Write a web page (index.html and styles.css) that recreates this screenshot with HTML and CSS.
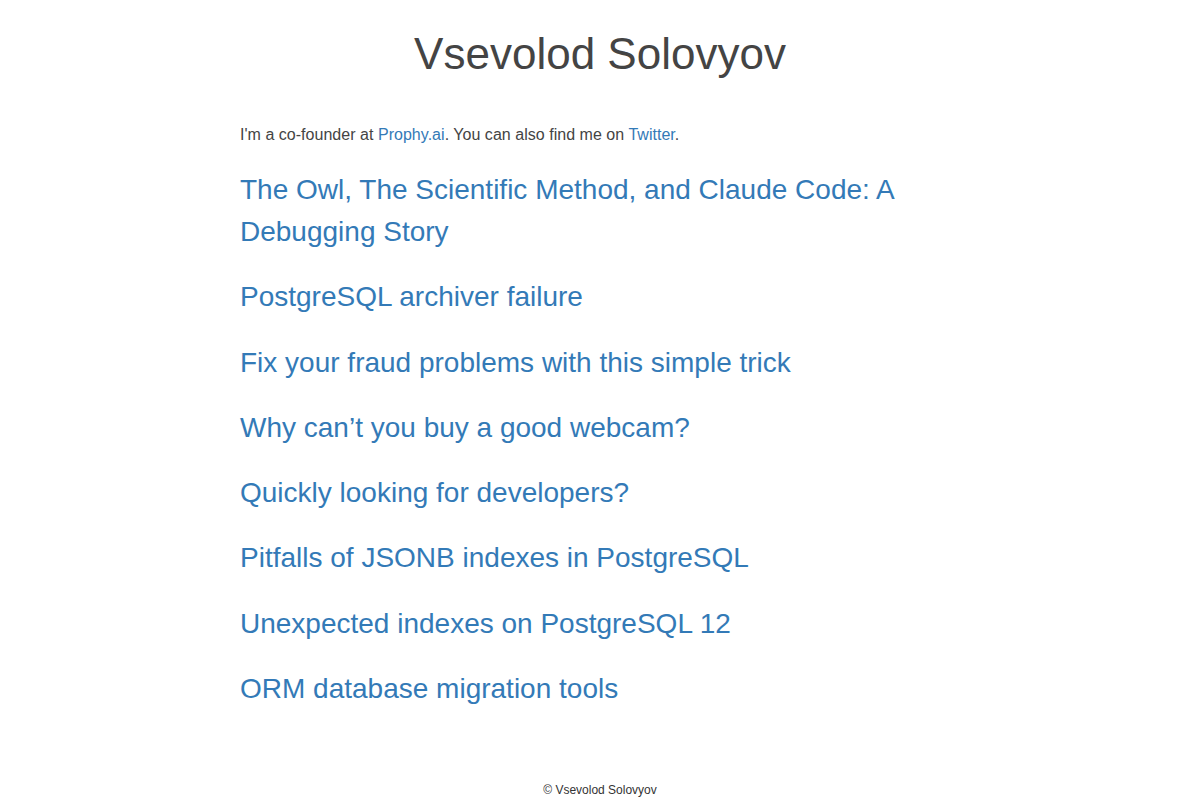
FILE: index.html
```html
<!DOCTYPE html>
<html lang="en">
<head>
<meta charset="utf-8">
<title>Vsevolod Solovyov</title>
<link rel="stylesheet" href="styles.css">
</head>
<body>
<div class="page">
  <header class="site-header">
    <h1 class="site-title">Vsevolod Solovyov</h1>
  </header>
  <main class="content">
    <p class="intro">I'm a co-founder at <a href="#">Prophy.ai</a>. You can also find me on <a href="#">Twitter</a>.</p>
    <ul class="posts">
      <li><a href="#">The Owl, The Scientific Method, and Claude Code: A Debugging Story</a></li>
      <li><a href="#">PostgreSQL archiver failure</a></li>
      <li><a href="#">Fix your fraud problems with this simple trick</a></li>
      <li><a href="#">Why can’t you buy a good webcam?</a></li>
      <li><a href="#">Quickly looking for developers?</a></li>
      <li><a href="#">Pitfalls of JSONB indexes in PostgreSQL</a></li>
      <li><a href="#">Unexpected indexes on PostgreSQL 12</a></li>
      <li><a href="#">ORM database migration tools</a></li>
    </ul>
  </main>
  <footer class="site-footer">© Vsevolod Solovyov</footer>
</div>
</body>
</html>
```

FILE: styles.css
```css
html, body {
  margin: 0;
  padding: 0;
  background: #fff;
}
body {
  font-family: "Liberation Sans", Arial, Helvetica, sans-serif;
  color: #444;
}
.page {
  min-height: 100vh;
  display: flex;
  flex-direction: column;
  align-items: center;
}
.site-header {
  width: 720px;
  padding-top: 30px;
  text-align: center;
}
.site-title {
  margin: 0;
  font-size: 44px;
  font-weight: normal;
  line-height: 48px;
  color: #444;
}
.content {
  width: 720px;
  padding-top: 45px;
}
.intro {
  margin: 0;
  font-size: 16px;
  letter-spacing: 0.03px;
  line-height: 24px;
}
a {
  color: #337ab7;
  text-decoration: none;
}
.posts {
  list-style: none;
  margin: 22px 0 0;
  padding: 0;
  display: flex;
  flex-direction: column;
  gap: 23.3px;
}
.posts li {
  font-size: 28px;
  line-height: 42px;
}
.site-footer {
  margin-top: auto;
  padding-bottom: 1px;
  font-size: 12px;
  line-height: 18px;
  color: #333;
  text-align: center;
}
```
